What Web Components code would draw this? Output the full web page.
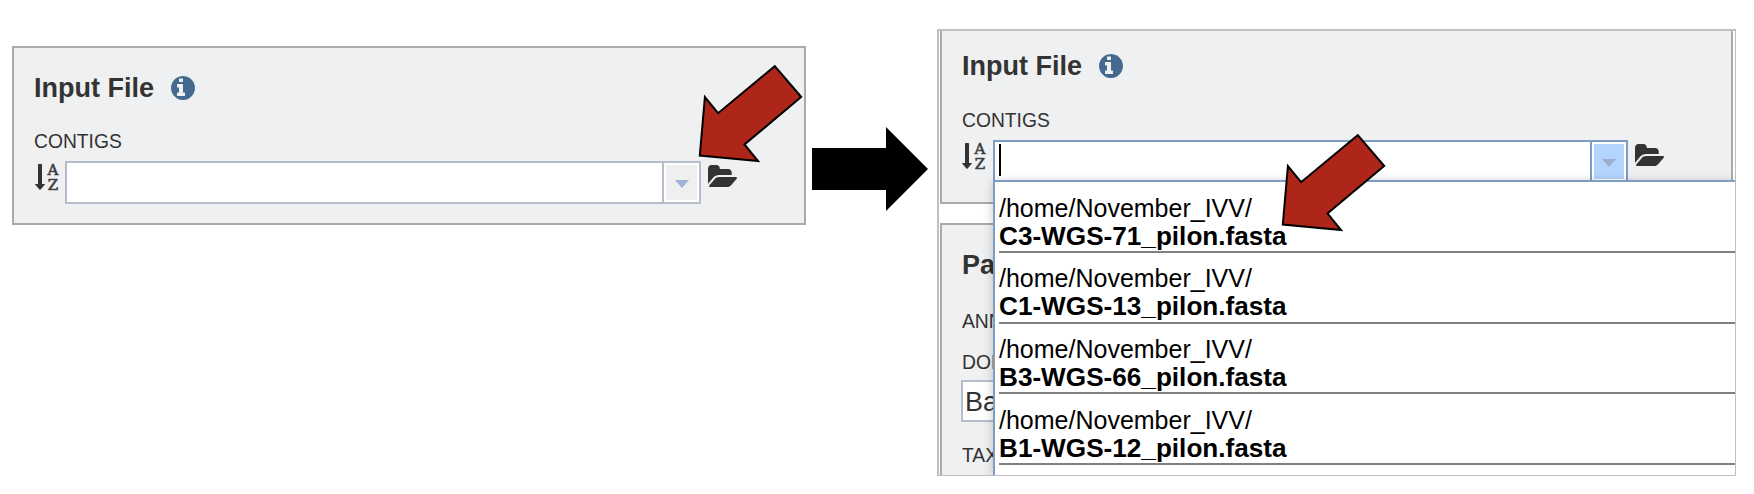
<!DOCTYPE html>
<html lang="en">
<head>
<meta charset="utf-8">
<title>Input File selection</title>
<style>
html, body { margin: 0; background: #fff; }
body { width: 1754px; height: 494px; overflow: hidden; font-family: "Liberation Sans", Arial, sans-serif; color: #333; }
</style>
</head>
<body>
<tutorial-stage></tutorial-stage>
<script>
function define(name, markup) {
  const template = document.createElement('template');
  template.innerHTML = markup;
  customElements.define(name, class extends HTMLElement {
    constructor() {
      super();
      this.attachShadow({ mode: 'open' }).appendChild(template.content.cloneNode(true));
    }
  });
}

define('info-icon', `
<style>:host{display:block;width:24px;height:24px;color:#44698f}svg{display:block}</style>
<svg width="24" height="24" viewBox="128 128 1536 1536" fill="currentColor"><path d="M1024 1376v-160q0-14-9-23t-23-9h-96v-512q0-14-9-23t-23-9h-320q-14 0-23 9t-9 23v160q0 14 9 23t23 9h96v320h-96q-14 0-23 9t-9 23v160q0 14 9 23t23 9h448q14 0 23-9t9-23zM896 480v-160q0-14-9-23t-23-9h-192q-14 0-23 9t-9 23v160q0 14 9 23t23 9h192q14 0 23-9t9-23zM1664 896q0 209-103 385.5t-279.5 279.5-385.5 103-385.5-103-279.5-279.5-103-385.5 103-385.5 279.5-279.5 385.5-103 385.5 103 279.5 279.5 103 385.5z"/></svg>`);

define('folder-icon', `
<style>:host{display:block;width:29px;height:22px;color:#333}svg{display:block}</style>
<svg width="29" height="22" viewBox="0 128 1879 1408" preserveAspectRatio="none" fill="currentColor"><path d="M1879 952q0 31-31 66l-336 396q-43 51-120.5 86.5t-143.5 35.5h-1088q-34 0-60.5-13t-26.5-43q0-31 31-66l336-396q43-51 120.5-86.5t143.5-35.5h1088q34 0 60.5 13t26.5 43zM1536 608v160h-832q-94 0-197 47.5t-164 119.5l-337 396-5 6q0-4-.5-12.5t-.5-12.5v-960q0-92 66-158t158-66h320q92 0 158 66t66 158v32h544q92 0 158 66t66 158z"/></svg>`);

define('sort-icon', `
<style>
:host{display:flex;width:30px;height:27px;color:#333}
svg{display:block;flex:none}
.az{display:flex;flex-direction:column;margin:-1px 0 0 2px;width:12px;text-align:center;font:15px/14.5px "DejaVu Serif",serif;-webkit-text-stroke:.6px #444}
</style>
<svg width="10" height="27" viewBox="0 0 10 27" fill="currentColor"><path d="M3 .7q0-.7.7-.7h2.6q.7 0 .7.7V20h2.3q.9 0 .4.8L5.6 25.6q-.6.6-1.2 0L.3 20.8Q-.2 20 .7 20H3z"/></svg>
<div class="az"><span>A</span><span>Z</span></div>`);

define('section-title', `
<style>:host{display:flex;align-items:center;height:32px;margin-left:-1px;font-size:27px;font-weight:700;line-height:32px;white-space:nowrap}
::slotted(info-icon){margin-left:17px}</style><slot></slot>`);

define('field-label', `
<style>:host{display:block;height:22px;margin-left:-1px;font-size:19.3px;line-height:22px;white-space:nowrap}</style><slot></slot>`);

define('combo-box', `
<style>
:host{display:flex;box-sizing:border-box;width:636px;height:43px;border:2px solid #b7bdcd;background:#fff;--line:#b7bdcd;--fill:#efefef;--tri:#9fb2d6}
:host([focused]){border-color:#7d9dc2;--line:#7d9dc2;--fill:#b3d4fc;--tri:#9caed0;width:635px}
.field{flex:1;padding:2px 4px}
.caret{display:none;width:2px;height:32px;background:#000}
:host([focused]) .caret{display:block}
.button{display:flex;align-items:center;justify-content:center;box-sizing:border-box;width:37px;border-left:2px solid var(--line);padding:2px}
:host([focused]) .button{width:36px}
.face{display:flex;align-items:center;justify-content:center;flex:1;height:100%;background:var(--fill)}
.face i{margin-top:3px;border:7px solid transparent;border-top:8px solid var(--tri);border-bottom:0}
</style>
<div class="field"><div class="caret"></div></div>
<div class="button"><div class="face"><i></i></div></div>`);

define('file-row', `
<style>
:host{display:flex;align-items:flex-start}
sort-icon{margin-top:3px}
folder-icon{margin:4px 0 0 7px}
</style>
<sort-icon></sort-icon><slot></slot><folder-icon></folder-icon>`);

define('form-panel', `
<style>:host{display:block;box-sizing:border-box;border:2px solid #a9aaaa;background:#eff0f2}</style><slot></slot>`);

define('file-option', `
<style>
:host{display:block;box-sizing:border-box;height:70.6px;padding-top:11.4px;border-bottom:2px solid #808080;color:#000;white-space:nowrap;line-height:28px}
.path{font-size:25px;height:28px}
.name{font-size:26.15px;height:28px;font-weight:700}
</style>
<div class="path"><slot name="path"></slot></div><div class="name"><slot></slot></div>`);

define('file-menu', `
<style>
:host{display:block;box-sizing:border-box;width:742px;height:295px;border:solid #7d9dc2;border-width:2px 0 0 2px;background:#fff;padding:.5px 0 0 4px;box-shadow:0 2px 10px rgba(0,0,0,.22)}
</style><slot></slot>`);

define('red-arrow', `
<style>:host{display:block;pointer-events:none}svg{display:block}</style>
<svg width="108" height="102" viewBox="0 0 108 102"><path d="M77.8 3.2 104.2 34 47.5 81.5 61 98 2.8 92.6 7.9 34 21.1 50.2Z" fill="#ae2519" stroke="#000" stroke-width="2"/></svg>`);

define('step-arrow', `
<style>:host{display:block}svg{display:block}</style>
<svg width="116" height="84" viewBox="0 0 116 84"><path d="M0 21H74V0L116 42 74 84V63H0z" fill="#000"/></svg>`);

define('before-view', `
<style>
:host{display:block;position:relative}
form-panel{width:794px;height:179px;padding:24px 0 0 21px}
field-label{margin-top:27px}
file-row{margin-top:8px}
red-arrow{position:absolute;left:685px;top:17px}
</style>
<form-panel>
<section-title>Input File<info-icon></info-icon></section-title>
<field-label>CONTIGS</field-label>
<file-row><combo-box></combo-box></file-row>
</form-panel>
<red-arrow></red-arrow>`);

define('after-view', `
<style>
:host{display:block;position:relative;box-sizing:border-box;width:799px;height:447px;border:solid #bfbfbf;border-width:2px 1px 1px 2px;background:#fff}
.view{height:444px;overflow:hidden;padding-left:1px}
form-panel{width:793px}
.input{height:173px;border-top:0;padding:19px 0 0 20px}
.params{height:300px;margin-top:19px;padding:24px 0 0 20px}
section-title,field-label{margin-left:0}
.input field-label{margin-top:28px}
file-row{margin-top:8px}
combo-box{margin-left:1px}
.params section-title,.params field-label{width:31px;overflow:hidden}
.ann{margin-top:30px}.dom{margin-top:19px}.tax{margin-top:23px}
.select{box-sizing:border-box;margin:6px 0 0 -1px;width:32px;overflow:hidden;height:42px;border:2px solid #b7bdcd;border-right:0;background:#fff;padding-left:2px;font-size:27px;line-height:40px}
.clip{position:absolute;left:0;top:0;width:796px;height:444px;overflow:hidden}
file-menu{position:absolute;left:54px;top:149px}
red-arrow{position:absolute;left:341px;top:101px}
</style>
<div class="view">
<form-panel class="input">
<section-title>Input File<info-icon></info-icon></section-title>
<field-label>CONTIGS</field-label>
<file-row><combo-box focused></combo-box></file-row>
</form-panel>
<form-panel class="params">
<section-title>Pa</section-title>
<field-label class="ann">ANN</field-label>
<field-label class="dom">DOM</field-label>
<div class="select">Ba</div>
<field-label class="tax">TAX</field-label>
</form-panel>
</div>
<div class="clip">
<file-menu>
<file-option><span slot="path">/home/November_IVV/</span>C3-WGS-71_pilon.fasta</file-option>
<file-option><span slot="path">/home/November_IVV/</span>C1-WGS-13_pilon.fasta</file-option>
<file-option><span slot="path">/home/November_IVV/</span>B3-WGS-66_pilon.fasta</file-option>
<file-option><span slot="path">/home/November_IVV/</span>B1-WGS-12_pilon.fasta</file-option>
</file-menu>
</div>
<red-arrow></red-arrow>`);

define('tutorial-stage', `
<style>
:host{display:flex;align-items:flex-start;box-sizing:border-box;width:1754px;height:494px;padding:29px 0 0 12px}
before-view{margin-top:17px}
step-arrow{margin:98px 9px 0 6px}
</style>
<before-view></before-view><step-arrow></step-arrow><after-view></after-view>`);
</script>
</body>
</html>
